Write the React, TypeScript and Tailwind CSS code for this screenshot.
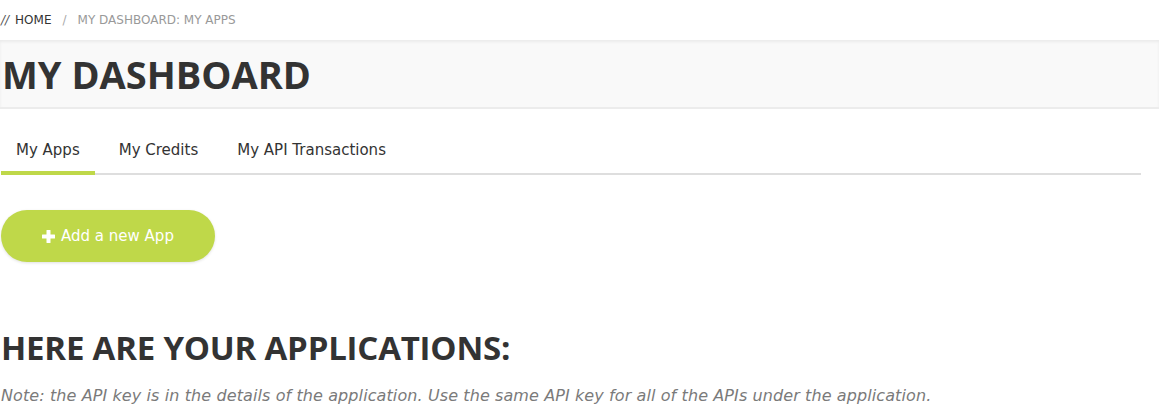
export default function App() {
	const body = { fontFamily: '"DejaVu Sans", "Liberation Sans", sans-serif' };
	const head = { fontFamily: '"Open Sans", "Liberation Sans", sans-serif' };
	return (
		<div className="min-h-[410px] bg-white text-[#333]" style={body}>
			<div className="h-10 flex items-center pl-px text-[12px] uppercase">
				<span className="text-[#555] mr-[6px] italic">//</span>
				<span className="text-[#333]">Home</span>
				<span className="text-[#aaa] mx-[11px]">/</span>
				<span className="text-[#999]">My Dashboard: My Apps</span>
			</div>
			<div className="bg-[#f9f9f9] border-b-2 border-[#ececec] shadow-[inset_0_2px_3px_rgba(0,0,0,0.06)] h-[69px] flex items-center pl-0.5">
				<h1 className="text-[38px] font-bold uppercase leading-none" style={head}>My Dashboard</h1>
			</div>
			<div className="pl-px pr-[18px]">
				<div className="mt-[22px] flex border-b-2 border-[#dedede] text-[15px] leading-5">
					<div className="px-[15px] pt-[9px] pb-[11px] border-b-4 border-[#bfd849] -mb-0.5">My Apps</div>
					<div className="px-[24px] pt-[9px] pb-[11px]">My Credits</div>
					<div className="px-[15px] pt-[9px] pb-[11px]">My API Transactions</div>
				</div>
				<button className="mt-[35px] h-[52px] w-[214px] rounded-full bg-[#bfd849] text-white text-[15px] flex items-center justify-center gap-[6px] shadow-[0_1px_3px_rgba(0,0,0,0.12)]">
					<svg width="13" height="13" viewBox="0 0 13 13" fill="white">
						<rect x="4.5" y="0" width="4" height="13" rx="0.5" />
						<rect x="0" y="4.5" width="13" height="4" rx="0.5" />
					</svg>
					<span>Add a new App</span>
				</button>
				<h2 className="mt-[69px] text-[33px] font-bold uppercase leading-none tracking-[-0.2px]" style={head}>Here are your applications:</h2>
				<p className="mt-[20px] text-[16px] leading-6 italic text-[#7a7a7a] tracking-[0.1px]">
					Note: the API key is in the details of the application. Use the same API key for all of the APIs under the application.
				</p>
			</div>
		</div>
	);
}
